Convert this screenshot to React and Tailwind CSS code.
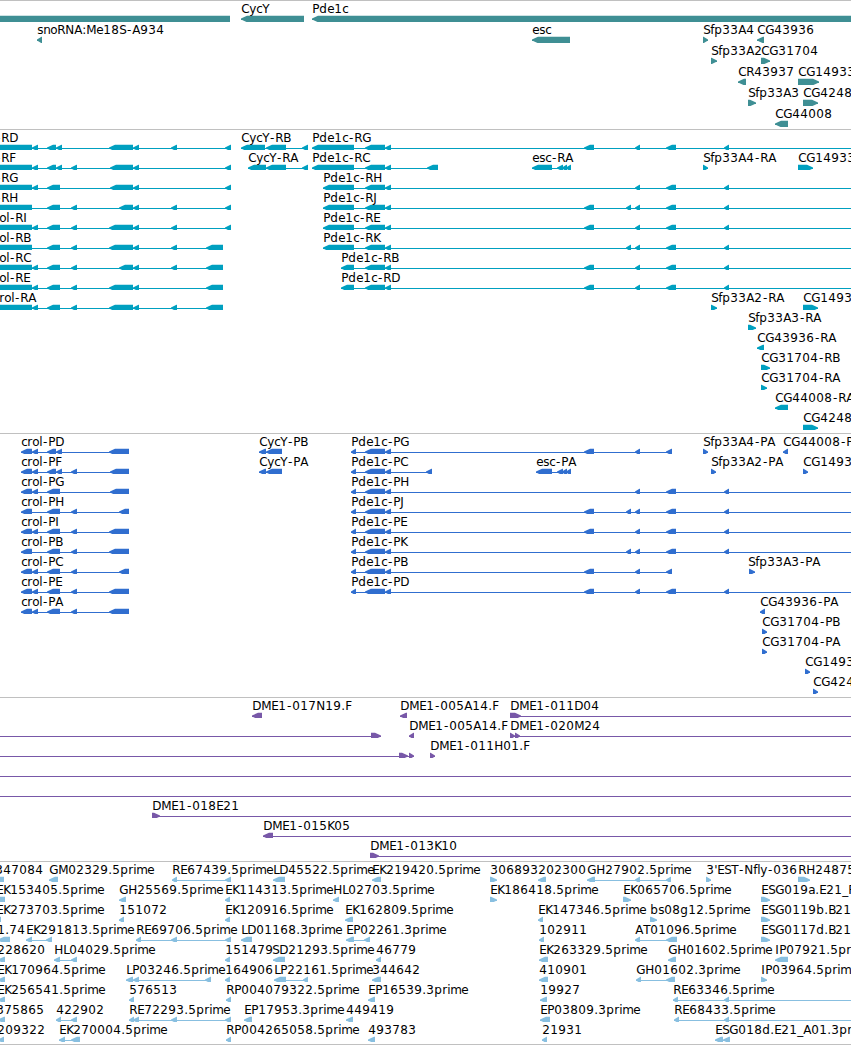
import React from 'react';

// advance width of every glyph used in the labels, in px
const ADVANCE = {
	C: 8, G: 9, D: 9, M: 10, E: 7, K: 7, R: 8, P: 7, A: 8, L: 6, H: 9, N: 9, S: 7, T: 7, I: 4, J: 5, F: 7, B: 7, Y: 7,
	c: 6, r: 5, o: 7, l: 3, s: 6, n: 7, e: 7, f: 4, p: 8, d: 8, b: 8, g: 8, i: 3, m: 11, y: 7, a: 7,
	'-': 6, '.': 4, ':': 4, "'": 3, _: 6,
};

const RIGHT_EDGE = 860;

// features on the reverse strand point left, on the forward strand they point right
const rev = (name, blocks, opts = {}) => ({ name, blocks, dir: 'left', ...opts });
const fwd = (name, blocks, opts = {}) => ({ name, blocks, dir: 'right', ...opts });
const toEdge = { to: RIGHT_EDGE };

// exons shared between the crol transcripts
const c32 = [32, 38];
const c47 = [47, 60];
const c47s = [47, 56];
const c56 = [56, 62];
const c71 = [71, 77];
const c133 = [133, 139];
const c171 = [171, 177];
const c225 = [225, 231];
const c206 = [206, 223];
const crolR = (name, x, blocks) => rev(name, [[-20, 32], ...blocks], { x });

// exons shared between the Pde1c transcripts
const p365 = [[365, 385], [385, 391]];
const p584 = [584, 594];
const p626 = [626, 631];
const p635 = [635, 640];
const p666 = [666, 676];
const p724 = [724, 729];
const pdeR = (name, start, blocks) => rev(name, [[start, 354], ...p365, ...blocks], toEdge);
const pdeP = (name, blocks, opts = toEdge) => rev(name, [[351, 356], ...p365, ...blocks], opts);

const genes = [
	[
		rev('', [[-20, 230]]),
		rev('CycY', [[241, 304]]),
		rev('Pde1c', [[312, RIGHT_EDGE]]),
	],
	[
		rev('snoRNA:Me18S-A934', [[37, 42]]),
		rev('esc', [[532, 570]]),
		fwd('Sfp33A4', [[703, 708]]),
		rev('CG43936', [[757, 764]]),
	],
	[fwd('Sfp33A2', [[711, 717]]), fwd('CG31704', [[761, 770]])],
	[rev('CR43937', [[738, 746]]), fwd('CG14933', [[798, 819]])],
	[fwd('Sfp33A3', [[748, 756]]), fwd('CG42481', [[803, 818]])],
	[rev('CG44008', [[775, 788]])],
];

const transcripts = [
	[
		crolR('crol-RD', -26, [c32, c47s, c56, [109, 133], c133, c171, c225]),
		rev('CycY-RB', [[241, 265], [266, 286], [302, 308]]),
		pdeR('Pde1c-RG', 312, [p584, p635, p666, p724]),
	],
	[
		crolR('crol-RF', -26, [c32, c47s, c56, c71, [110, 133], c133, c225]),
		rev('CycY-RA', [[248, 266], [266, 286], [302, 308]]),
		rev('Pde1c-RC', [[312, 354], ...p365, [427, 438]]),
		rev('esc-RA', [[532, 552], [557, 563], [562, 567], [566, 571]]),
		fwd('Sfp33A4-RA', [[703, 708]]),
		fwd('CG14933-RA', [[798, 813]]),
	],
	[
		crolR('crol-RG', -26, [c32, c47, [110, 133], c133, c225]),
		pdeR('Pde1c-RH', 323, [p635, p666, p724]),
	],
	[
		crolR('crol-RH', -26, [c47, c71, [119, 133], c133, c171, c225]),
		pdeR('Pde1c-RJ', 323, [p584, p626, p635, p666, p724]),
	],
	[
		crolR('crol-RI', -12, [c32, c47, c71, [109, 133], c133, c171, c225]),
		pdeR('Pde1c-RE', 323, [p584, p635, p666, p724]),
	],
	[
		crolR('crol-RB', -12, [c47, c71, [109, 133], c133, c171, c206]),
		pdeR('Pde1c-RK', 323, [p626, p635, p666, p724]),
	],
	[
		crolR('crol-RC', -12, [c32, c47, c71, [119, 133], c133, c171, c206]),
		pdeR('Pde1c-RB', 341, [p584, p635, p666, p724]),
	],
	[
		crolR('crol-RE', -12, [c32, c47, c71, [109, 133], c133, c206]),
		pdeR('Pde1c-RD', 341, [p584, p635, p666, p724]),
	],
	[
		crolR('crol-RA', -7, [c32, c47, c71, [109, 133], c133, c171, c206]),
		fwd('Sfp33A2-RA', [[711, 717]]),
		fwd('CG14933-RB', [[803, 818]]),
	],
	[fwd('Sfp33A3-RA', [[748, 756]])],
	[rev('CG43936-RA', [[757, 764]])],
	[fwd('CG31704-RB', [[761, 770]])],
	[fwd('CG31704-RA', [[761, 767]])],
	[rev('CG44008-RA', [[775, 788]])],
	[fwd('CG42481-RA', [[803, 818]])],
];

const proteins = [
	[
		rev('crol-PD', [[21, 32], c32, c47s, c56, [109, 129]]),
		rev('CycY-PB', [[259, 266], [266, 282]]),
		pdeP('Pde1c-PG', [p584, p635, [666, 672]], {}),
		fwd('Sfp33A4-PA', [[703, 708]]),
		rev('CG44008-PA', [[783, 788]]),
	],
	[
		rev('crol-PF', [[21, 32], c32, c47s, c56, c71, [110, 129]]),
		rev('CycY-PA', [[259, 266], [266, 282]]),
		pdeP('Pde1c-PC', [[426, 432]], {}),
		rev('esc-PA', [[536, 552], [557, 563], [562, 567], [566, 571]]),
		fwd('Sfp33A2-PA', [[711, 716]]),
		fwd('CG14933-PB', [[803, 808]]),
	],
	[
		rev('crol-PG', [[21, 32], c32, c47, [110, 129]]),
		pdeP('Pde1c-PH', [p635, p666, p724]),
	],
	[
		rev('crol-PH', [[21, 32], c47, c71, [119, 129]]),
		pdeP('Pde1c-PJ', [p584, p626, p635, p666, p724]),
	],
	[
		rev('crol-PI', [[21, 32], c32, c47, c71, [109, 129]]),
		pdeP('Pde1c-PE', [p584, p635, p666, p724]),
	],
	[
		rev('crol-PB', [[21, 32], c47, c71, [109, 129]]),
		pdeP('Pde1c-PK', [p626, p635, p666, p724]),
	],
	[
		rev('crol-PC', [[21, 32], c32, c47, c71, [119, 129]]),
		pdeP('Pde1c-PB', [p584, p635, [666, 672]], {}),
		fwd('Sfp33A3-PA', [[749, 755]], { x: 748 }),
	],
	[
		rev('crol-PE', [[21, 32], c32, c47, c71, [109, 129]]),
		pdeP('Pde1c-PD', [p584, p635, p666, p724]),
	],
	[
		rev('crol-PA', [[21, 32], c32, c47, c71, [109, 129]]),
		rev('CG43936-PA', [[760, 765]]),
	],
	[fwd('CG31704-PB', [[762, 767]])],
	[fwd('CG31704-PA', [[762, 767]])],
	[fwd('CG14933-PA', [[805, 810]])],
	[fwd('CG42481-PA', [[813, 818]])],
];

const clones = [
	[
		rev('DME1-017N19.F', [[252, 262]]),
		rev('DME1-005A14.F', [[400, 407]]),
		fwd('DME1-011D04', [[510, 521]], toEdge),
	],
	[
		fwd('', [[371, 381]], { from: -5 }),
		rev('DME1-005A14.F', [[409, 414]]),
		fwd('DME1-020M24', [[510, 515], [515, 520]], toEdge),
	],
	[
		fwd('', [[399, 408], [409, 414]], { from: -5 }),
		fwd('DME1-011H01.F', [[430, 435]]),
	],
	[fwd('', [], { from: -5, to: RIGHT_EDGE })],
	[fwd('', [], { from: -5, to: RIGHT_EDGE })],
	[fwd('DME1-018E21', [[152, 160]], toEdge)],
	[rev('DME1-015K05', [[263, 273]], toEdge)],
	[fwd('DME1-013K10', [[370, 379]], toEdge)],
];

const ests = [
	[
		rev('347084', [[-10, 4]], { x: -5 }),
		rev('GM02329.5prime', [[49, 58]]),
		rev('RE67439.5prime', [[172, 177], c225]),
		rev('LD45522.5prime', [[273, 285]]),
		rev('EK219420.5prime', [[372, 381]]),
		fwd('306893', [[490, 497]]),
		rev('202300', [[538, 546]]),
		rev('GH27902.5prime', [[587, 595], [635, 640], [666, 671]]),
		fwd("3'EST-Nfly-036", [[706, 711]]),
		fwd('RH24875', [[798, 810]]),
	],
	[
		rev('EK153405.5prime', [[-10, 5]], { x: -4 }),
		rev('GH25569.5prime', [[119, 126]]),
		rev('EK114313.5prime', [[225, 230]]),
		rev('HL02703.5prime', [[333, 339]]),
		fwd('EK186418.5prime', [[490, 497]]),
		fwd('EK065706.5prime', [[623, 631]]),
		fwd('ESG019a.E21_F', [[761, 770]]),
	],
	[
		rev('EK273703.5prime', [[-10, 1]], { x: -4 }),
		rev('151072', [[119, 124]]),
		rev('EK120916.5prime', [[225, 230]]),
		rev('EK162809.5prime', [[345, 353]]),
		rev('EK147346.5prime', [[538, 543]]),
		fwd('bs08g12.5prime', [[650, 657]]),
		fwd('ESG0119b.B21', [[761, 770]]),
	],
	[
		rev('1.74', [[-2, 10]], { x: -3 }),
		rev('EK291813.5prime', [[26, 32], [46, 52]]),
		rev('RE69706.5prime', [[136, 141], c171, c225]),
		rev('LD01168.3prime', [[241, 252]]),
		rev('EP02261.3prime', [[346, 354], [364, 370]]),
		rev('102911', [[539, 544]]),
		rev('AT01096.5prime', [[635, 640], [666, 677]]),
		fwd('ESG0117d.B21', [[761, 770]]),
	],
	[
		rev('228620', [[-2, 5]], { x: -3 }),
		rev('HL04029.5prime', [[54, 60], c71]),
		rev('151479', [[225, 230]]),
		rev('SD21293.5prime', [[273, 285]], { x: 272 }),
		rev('46779', [[376, 381]]),
		rev('EK263329.5prime', [[539, 548]]),
		rev('GH01602.5prime', [[668, 676]]),
		rev('IP07921.5prime', [[775, 788]]),
	],
	[
		rev('EK170964.5prime', [[-2, 5]], { x: -3 }),
		rev('LP03246.5prime', [[126, 133], c133, [205, 211]]),
		rev('164906', [[225, 230]]),
		rev('LP22161.5prime', [[274, 286], [303, 308]]),
		rev('344642', [[372, 381]]),
		rev('410901', [[539, 548]]),
		rev('GH01602.3prime', [[636, 641], [666, 675]]),
		fwd('IP03964.5prime', [[761, 767]]),
	],
	[
		rev('EK256541.5prime', [[-2, 5]], { x: -3 }),
		rev('576513', [[129, 134]]),
		rev('RP004079322.5prime', [[226, 231]]),
		rev('EP16539.3prime', [[368, 375]]),
		rev('19927', [[540, 547]]),
		rev('RE63346.5prime', [[673, 678], p724], toEdge),
	],
	[
		rev('375865', [[-2, 5]], { x: -4 }),
		rev('422902', [[56, 61], c71]),
		rev('RE72293.5prime', [[129, 134], [133, 139], c171, c225]),
		rev('EP17953.3prime', [[244, 252]]),
		rev('449419', [[346, 353]]),
		rev('EP03809.3prime', [[540, 550]]),
		rev('RE68433.5prime', [[674, 679], p724], toEdge),
	],
	[
		rev('209322', [[-2, 4]], { x: -3 }),
		rev('EK270004.5prime', [[59, 65], [71, 80]]),
		rev('RP004265058.5prime', [[226, 231]]),
		rev('493783', [[368, 375]]),
		rev('21931', [[542, 547]]),
		rev('ESG018d.E21_A01.3prime', [[715, 723], [723, 730]]),
	],
];

function Label({ name, x }) {
	const xs = [];
	let pos = x + 0.2;
	for (const ch of name) {
		// the hyphen is narrower than its cell, so centre it
		xs.push(ch === '-' ? pos + 0.9 : pos);
		pos += ADVANCE[ch] ?? 8;
	}
	return <text x={xs.join(' ')} y={12} className="fill-black">{name}</text>;
}

function Block({ start, end, dir }) {
	const head = Math.min(6, end - start - 0.5);
	const tip = dir === 'left' ? start : end;
	const tail = dir === 'left' ? end : start;
	const neck = dir === 'left' ? start + head : end - head;
	const points = [
		[tip, 17.4], [neck, 14.8], [tail, 14.8],
		[tail, 21.2], [neck, 21.2], [tip, 18.6],
	];
	return <polygon points={points.join(' ')} />;
}

function Feature({ feature }) {
	const { name, blocks, dir, x, from, to } = feature;
	const start = from ?? blocks[0][0];
	const end = to ?? blocks[blocks.length - 1][1];
	return (
		<g>
			<rect x={start} y={18} width={end - start} height={1} shapeRendering="crispEdges" />
			{blocks.map(([a, b]) => <Block key={a} start={a} end={b} dir={dir} />)}
			{name && <Label name={name} x={x ?? start} />}
		</g>
	);
}

function Track({ rows, color, rowHeight = 'h-5', pad = 'pb-[3px]' }) {
	return (
		<section className={`flex flex-col border-t border-[#c0c0c0] ${pad}`}>
			{rows.map((features, i) => (
				<svg key={i} className={`block w-full shrink-0 ${rowHeight} ${color}`}>
					{features.map((feature, j) => <Feature key={j} feature={feature} />)}
				</svg>
			))}
		</section>
	);
}

export default function App() {
	return (
		<main className="w-[851px] h-[1045px] overflow-hidden bg-white border-b border-[#c0c0c0] text-[12px] font-['DejaVu_Sans',sans-serif]">
			<Track rows={genes} color="fill-[#3f8f94]" rowHeight="h-[21px]" pad="pb-[2px]" />
			<Track rows={transcripts} color="fill-[#00a0c0]" />
			<Track rows={proteins} color="fill-[#306ecf]" />
			<Track rows={clones} color="fill-[#7858a8]" />
			<Track rows={ests} color="fill-[#88bfe0]" pad="pb-[2px]" />
		</main>
	);
}
